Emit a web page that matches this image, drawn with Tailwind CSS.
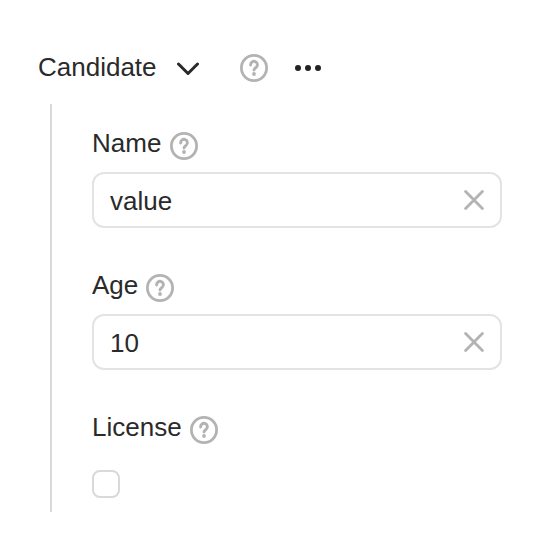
<!DOCTYPE html>
<html lang="en"><head><meta charset="utf-8"><title>Candidate</title>
<script src="https://cdn.jsdelivr.net/npm/@tailwindcss/browser@4"></script></head>
<body class="bg-white font-['Liberation_Sans',Arial,sans-serif] text-[26px] leading-8 text-[#2a2a2a]">
<svg class="hidden"><defs>
<symbol id="help" viewBox="0 0 28 28"><circle cx="14" cy="14" r="12.6" fill="none" stroke="#b3b3b3" stroke-width="2.8"/><path d="M10.6 11a3.4 3.4 0 1 1 5.5 2.4c-1.3 1-2.1 1.4-2.1 2.7" fill="none" stroke="#b3b3b3" stroke-width="2.9" stroke-linecap="round" stroke-linejoin="round"/><circle cx="14" cy="20" r="1.9" fill="#b3b3b3"/></symbol>
<symbol id="clear" viewBox="0 0 20 20"><path d="M1.6 1.6L18.4 18.4M18.4 1.6L1.6 18.4" fill="none" stroke="#b3b3b3" stroke-width="2.8" stroke-linecap="round"/></symbol>
</defs></svg>
<main class="h-[552px] w-[542px] pt-[51px]">
<header class="flex h-8 items-center pl-[38px]">
<h1 class="w-[119px]">Candidate</h1>
<svg class="ml-5 mt-[3px] h-[14px] w-[22px]" viewBox="0 0 22 14"><path d="M1.5 2L11 11.5L20.5 2" fill="none" stroke="#2a2a2a" stroke-width="3" stroke-linecap="round" stroke-linejoin="round"/></svg>
<svg class="ml-[41px] mt-0.5 size-7"><use href="#help"/></svg>
<svg class="ml-[27px] mt-0.5 h-1.5 w-[26px]" viewBox="0 0 26 6" fill="#222"><circle cx="3" cy="3" r="3"/><circle cx="13" cy="3" r="3"/><circle cx="23" cy="3" r="3"/></svg>
</header>
<section class="ml-[50px] mt-[21px] h-[408px] border-l-2 border-[#d9d9d9] pl-10 pr-10 pt-[23px]">
<div class="h-[142px]"><div class="flex h-[45px] items-start"><label for="name">Name</label><svg class="ml-[9px] mt-[5px] size-7"><use href="#help"/></svg></div>
<div class="flex h-14 items-center justify-between rounded-xl border-2 border-[#e3e3e3] px-4"><input id="name" class="w-80 pt-0.5 outline-none" value="value"><svg class="size-5"><use href="#clear"/></svg></div></div>
<div class="h-[142px]"><div class="flex h-[45px] items-start"><label for="age">Age</label><svg class="ml-2 mt-[5px] size-7"><use href="#help"/></svg></div>
<div class="flex h-14 items-center justify-between rounded-xl border-2 border-[#e3e3e3] px-4"><input id="age" class="w-80 pt-0.5 outline-none" value="10"><svg class="size-5"><use href="#clear"/></svg></div></div>
<div><div class="flex h-[59px] items-start"><label for="license">License</label><svg class="ml-2 mt-[5px] size-7"><use href="#help"/></svg></div>
<input id="license" type="checkbox" class="block size-7 appearance-none rounded-lg border-2 border-[#d9d9d9]"></div>
</section>
</main></body></html>
